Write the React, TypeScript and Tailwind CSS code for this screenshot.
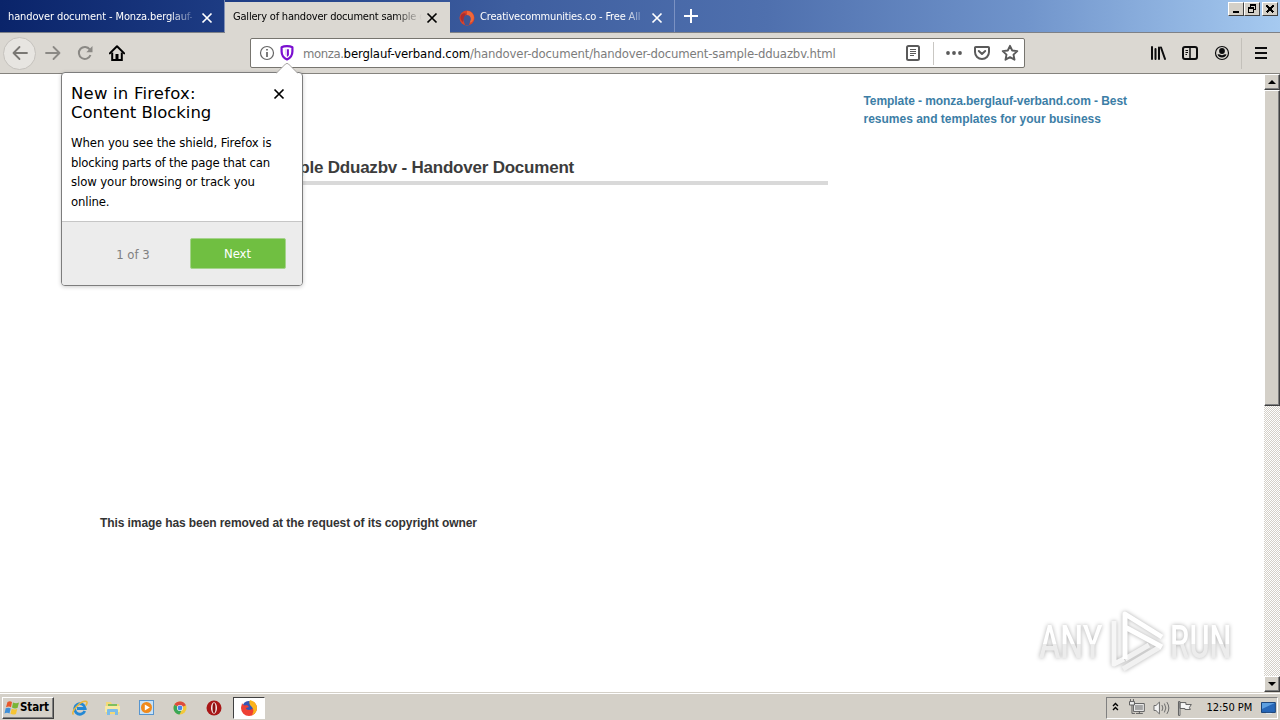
import React from "react";

const ui = "font-['DejaVu_Sans_Condensed','DejaVu_Sans',sans-serif] [font-stretch:condensed]";

function CloseIcon({ className = "" }: { className?: string }) {
  return (
    <svg width="12" height="12" viewBox="0 0 12 12" className={className}>
      <path d="M1.5 1.5l9 9M10.5 1.5l-9 9" stroke="currentColor" strokeWidth="1.7" fill="none" />
    </svg>
  );
}

function TabStrip() {
  return (
    <div
      className={`${ui} relative flex h-[33px] shrink-0 border-b border-[#7e8187] bg-[linear-gradient(91deg,#0a246a_0%,#203f87_20%,#3e5e9f_40%,#4f70ae_60%,#7094cb_80%,#a6caf0_100%)] text-[11px] text-white`}
    >
      <div className="flex w-[225px] items-center border-r border-[#8190b5] pt-[3px] pl-2">
        <span className="w-[184px] whitespace-nowrap tracking-[-0.12px] [mask-image:linear-gradient(90deg,#000_88%,transparent_104%)]">
          handover document - Monza.berglauf-
        </span>
        <CloseIcon className="ml-[9px]" />
      </div>
      <div className="mt-0.5 -mb-px flex w-[225px] items-center bg-[#dbd8d2] pl-2 text-black">
        <span className="w-[189px] whitespace-nowrap tracking-[-0.2px] [mask-image:linear-gradient(90deg,#000_85%,transparent)]">
          Gallery of handover document sample d
        </span>
        <CloseIcon className="ml-1" />
      </div>
      <div className="flex w-[225px] items-center border-r border-[#7b92c3] pt-[3px] pl-[9px]">
        <svg width="16" height="16" viewBox="0 0 16 16" className="mr-[5px]">
          <circle cx="8" cy="8" r="7.5" fill="#d8442a" />
          <path d="M8 1a6.5 6.5 0 0 1 5 11l-3 1c2-3 2-6-2-7z" fill="#f0683a" />
          <path d="M5 12c-2-4 0-7 3-7s5 3 3 7l-1 3H6z" fill="#3e5695" />
          <path d="M2 5c2-2 4-2 5-1L5 7 4 12C1 10 1 7 2 5z" fill="#a92d32" />
        </svg>
        <span className="w-[163px] whitespace-nowrap tracking-[-0.18px] [mask-image:linear-gradient(90deg,#000_88%,transparent_104%)]">
          Creativecommunities.co - Free All
        </span>
        <CloseIcon className="ml-2" />
      </div>
      <svg width="14" height="14" viewBox="0 0 14 14" className="mt-[9px] ml-[9px]">
        <path d="M7 0v14M0 7h14" stroke="#fff" strokeWidth="2" />
      </svg>
      <div className="absolute top-0.5 right-0.5 flex text-black">
        {["min", "restore", "close"].map((kind) => (
          <div
            key={kind}
            className={`flex h-[14px] w-4 items-center justify-center border border-t-white border-r-[#404040] border-b-[#404040] border-l-white bg-[#d4d0c8] ${kind === "close" ? "ml-0.5" : ""}`}
          >
            <svg width="12" height="10" viewBox="0 0 12 10" className="shrink-0" fill="none" stroke="#000" shapeRendering="crispEdges">
              {kind === "min" && <path d="M3 8h6" strokeWidth="2" />}
              {kind === "restore" && (
                <g>
                  <path d="M4.5 3V1.500h5v4H8M2.500 4.500h5v4h-5z" />
                  <path d="M4 1h6M2 4h6" strokeWidth="2" />
                </g>
              )}
              {kind === "close" && <path d="M2.500 1.500l7 7M9.500 1.500l-7 7" strokeWidth="1.500" />}
            </svg>
          </div>
        ))}
      </div>
    </div>
  );
}

function Toolbar() {
  return (
    <div className="flex h-[41px] shrink-0 items-center border-b border-[#85837e] bg-[#dbd8d2]">
      <div className="ml-[3px] flex size-[33px] items-center justify-center rounded-full border border-[#c5c2bd] bg-[#e7e5e1] text-[#7a7874]">
        <svg width="16" height="16" viewBox="0 0 16 16" fill="none" stroke="currentColor" strokeWidth="1.8" strokeLinecap="round" strokeLinejoin="round">
          <path d="M15 8H1.500M7.500 2l-6 6 6 6" />
        </svg>
      </div>
      <svg width="16" height="16" viewBox="0 0 16 16" className="ml-[9px]" fill="none" stroke="#8b8985" strokeWidth="1.8" strokeLinecap="round" strokeLinejoin="round">
        <path d="M1 8h13.500M8.500 2l6 6-6 6" />
      </svg>
      <svg width="16" height="16" viewBox="0 0 16 16" className="ml-4" fill="none" stroke="#8b8985" strokeWidth="2">
        <path d="M12.800 4.500A6 6 0 1 0 13.500 10" />
        <path d="M15.500 1v6.200H9.300z" fill="#8b8985" stroke="none" />
      </svg>
      <svg width="16" height="16" viewBox="0 0 16 16" className="ml-4" fill="none">
        <path d="M.8 8.400L8 1.200l7.200 7.200" stroke="#000" strokeWidth="2" strokeLinecap="round" strokeLinejoin="round" />
        <path d="M3.200 7.500V15h9.600V7.500" stroke="#000" strokeWidth="2" />
        <path d="M6.500 9h3v6h-3z" fill="#000" />
      </svg>

      <div className={`${ui} ml-[125px] flex h-[30px] w-[775px] items-center rounded-[2px] border border-[#77756f] bg-white text-[13px] text-[#7c7c7c]`}>
        <svg width="16" height="16" viewBox="0 0 16 16" className="ml-2" fill="none" stroke="#656565">
          <circle cx="8" cy="8" r="6.500" strokeWidth="1.200" />
          <path d="M8 7v5M8 4v1.600" strokeWidth="1.700" />
        </svg>
        <svg width="14" height="16" viewBox="0 0 14 16" className="ml-[5px]">
          <path d="M7 1.200c2 0 4 .3 5.400 1v4.300c0 3.700-1.900 6.400-5.400 8-3.500-1.600-5.400-4.300-5.400-8V2.200C3 1.500 5 1.200 7 1.200z" fill="none" stroke="#7a0fd0" strokeWidth="2.200" strokeLinejoin="round" />
          <path d="M7 4.200h1.900v6.100L7 12z" fill="#7a0fd0" />
          <path d="M5.100 4.200H7V12l-1.900-2.500z" fill="#e6d2f7" />
        </svg>
        <span className="mt-px ml-[9px] w-[601px] whitespace-nowrap">
          <span className="tracking-[-0.4px]">monza.</span>
          <span className="tracking-[-0.12px] text-black">berglauf-verband.com</span>
          <span className="tracking-[-0.15px]">/handover-document/handover-document-sample-dduazbv.html</span>
        </span>
        <svg width="16" height="16" viewBox="0 0 16 16" className="ml-px" fill="none" stroke="#5a5a5a">
          <rect x="2" y="1" width="12" height="14" rx="1.500" strokeWidth="2" />
          <path d="M5 4.500h6M5 6.500h6M5 8.500h6M5 10.500h4" />
        </svg>
        <div className="mx-3 h-[23px] w-px bg-[#c9c7c3]" />
        <svg width="16" height="16" viewBox="0 0 16 16" fill="#5a5a5a">
          <circle cx="2" cy="8" r="1.900" />
          <circle cx="8" cy="8" r="1.900" />
          <circle cx="14" cy="8" r="1.900" />
        </svg>
        <svg width="16" height="16" viewBox="0 0 16 16" className="ml-3" fill="none" stroke="#5a5a5a" strokeWidth="2" strokeLinejoin="round" strokeLinecap="round">
          <path d="M1.800 2h12.400a.8.8 0 0 1 .8.8V7A7 7 0 0 1 1 7V2.800a.8.8 0 0 1 .8-.8z" />
          <path d="M4.800 6L8 9l3.200-3" />
        </svg>
        <svg width="18" height="18" viewBox="0 0 18 18" className="ml-[11px] shrink-0" fill="none" stroke="#5a5a5a" strokeWidth="1.900" strokeLinejoin="round">
          <path d="M9 1.800l2.200 4.700 5.100.6-3.800 3.500 1 5.100L9 13.200l-4.500 2.500 1-5.100L1.700 7.100l5.100-.6z" />
        </svg>
      </div>

      <svg width="16" height="16" viewBox="0 0 16 16" className="ml-[125px]" fill="none" stroke="#0c0c0d" strokeWidth="2" strokeLinecap="round">
        <path d="M2 2v12M5.500 4v10M9 2.500V14M11 2.500L15 14" />
      </svg>
      <svg width="16" height="16" viewBox="0 0 16 16" className="ml-4" fill="none" stroke="#0c0c0d">
        <rect x="1" y="2" width="14" height="12" rx="2" strokeWidth="2" />
        <path d="M8 2v12" strokeWidth="1.500" />
        <path d="M3.500 5.500H6M3.500 7.500H6M3.500 9.500H5" />
      </svg>
      <svg width="16" height="16" viewBox="0 0 16 16" className="ml-4">
        <circle cx="8" cy="8" r="6.500" fill="none" stroke="#0c0c0d" strokeWidth="1.200" />
        <circle cx="8" cy="6" r="2.900" fill="#0c0c0d" />
        <path d="M3.400 9.500Q5 8.800 6 9.600q2 1.200 4 0 1-.8 2.600-.1A5 5 0 0 1 3.400 9.500z" fill="#0c0c0d" />
      </svg>
      <div className="ml-[11px] h-[31px] w-px bg-[#c3c0ba]" />
      <svg width="12" height="12" viewBox="0 0 12 12" className="ml-[13px]" stroke="#0c0c0d" strokeWidth="2">
        <path d="M0 1h12M0 6h12M0 11h12" />
      </svg>
    </div>
  );
}

function ScrollArrow({ up = false }: { up?: boolean }) {
  return (
    <div className="flex h-4 w-full shrink-0 items-center justify-center border border-t-white border-r-[#404040] border-b-[#404040] border-l-white bg-[#d4d0c8] shadow-[inset_-1px_-1px_#808080]">
      <svg width="8" height="4" viewBox="0 0 8 4">
        <path d={up ? "M4 0l4 4H0z" : "M0 0h8L4 4z"} />
      </svg>
    </div>
  );
}

function Page() {
  return (
    <div className="flex min-h-0 flex-1 bg-white">
      <main className="flex flex-1 items-start pl-[99px] font-['Liberation_Sans',Arial,sans-serif] font-bold">
        <div className="w-[729px]">
          <h1 className="mt-[83px] flex h-[28px] justify-end border-b-4 border-[#d9d9d9] pr-[254px] text-[17px] leading-[22px] tracking-[-0.22px] whitespace-nowrap text-[#3c3c3c]">
            Handover Document Sample Dduazbv - Handover Document
          </h1>
          <p className="mt-[329px] pl-px text-[12px] leading-[18px] tracking-[-0.08px] whitespace-nowrap text-[#333]">
            This image has been removed at the request of its copyright owner
          </p>
        </div>
        <p className="mt-[18px] ml-[35.500px] w-[290px] text-[12px] leading-[18px] text-[#3c7ea6]">
          <span className="tracking-[-0.07px]">Template - monza.berglauf-verband.com - Best</span>
          <br />
          resumes and templates for your business
        </p>
      </main>
      <div className="flex w-4 flex-col bg-[repeating-conic-gradient(#d4d0c8_0_25%,#fff_0_50%)] bg-[length:2px_2px]">
        <ScrollArrow up />
        <div className="h-[316px] border border-t-white border-r-[#404040] border-b-[#404040] border-l-white bg-[#d4d0c8] shadow-[inset_-1px_-1px_#808080]" />
        <div className="flex-1" />
        <ScrollArrow />
      </div>
    </div>
  );
}

function Doorhanger() {
  return (
    <div className={`${ui} absolute top-[72px] left-[61px] flex h-[214px] w-[242px] flex-col rounded-[4px] border border-[#7d7d7d] bg-white text-black shadow-[0_1px_4px_rgba(0,0,0,0.2)]`}>
      <svg width="22" height="11" viewBox="0 0 22 11" className="absolute -top-[10px] left-[214px]">
        <path d="M0 10.500L9.500 1q1.500-1.200 3 0L22 10.500" fill="#fff" stroke="#a5a3a0" />
        <path d="M1 10h20v1H1z" fill="#fff" />
      </svg>
      <div className="flex h-[148px] flex-col px-[9px] pt-[11px]">
        <div className="flex items-start justify-between">
          <h2 className="font-['DejaVu_Sans',sans-serif] text-[16.500px] leading-[19px] whitespace-nowrap [font-stretch:normal]">
            <span className="tracking-[0.2px]">New in Firefox:</span>
            <br />
            <span className="tracking-[-0.05px]">Content Blocking</span>
          </h2>
          <CloseIcon className="mt-1 mr-2" />
        </div>
        <p className="mt-[11px] text-[13px] leading-[19.700px] tracking-[-0.14px] whitespace-nowrap">
          <span className="tracking-[-0.08px]">When you see the shield, Firefox is</span>
          <br />
          <span className="tracking-[-0.2px]">blocking parts of the page that can</span>
          <br />
          <span className="tracking-[-0.1px]">slow your browsing or track you</span>
          <br />
          online.
        </p>
      </div>
      <div className="flex flex-1 items-center rounded-b-[3px] border-t border-[#c6c6c6] bg-[#ececec] pr-4 text-[13px]">
        <span className="mt-0.5 flex-1 pl-[14px] text-center text-[#808080]">1 of 3</span>
        <button className="h-[31px] w-[96px] rounded-[2px] border border-[#a5d38c] bg-[#70bf41] pr-px text-white">Next</button>
      </div>
    </div>
  );
}

function Watermark() {
  return (
    <div className="absolute top-[608px] left-[1039px] flex h-[66px] w-[194px] items-center justify-between pt-0.5 font-['Roboto',sans-serif] text-[46px] font-medium text-white [filter:drop-shadow(0_0_2px_rgba(0,0,0,0.32))]">
      <div className="w-[64px]">
        <span className="inline-block origin-left scale-x-[0.7] bg-[linear-gradient(#fff_52%,#ececec_52%)] bg-clip-text whitespace-nowrap text-transparent">
          ANY
        </span>
      </div>
      <svg width="60" height="64" viewBox="0 0 60 64" fill="none" stroke="#fff" strokeWidth="5" strokeLinejoin="round" className="absolute top-px left-[68px]">
        <path d="M7 12v43l10-5" stroke="#f6f6f6" />
        <path d="M16 60l37-22M18 50l24-14" stroke="#f1f1f1" />
        <path d="M18 50V5l37 23M18 18l37 20" />
      </svg>
      <div className="w-[63px]">
        <span className="inline-block origin-left scale-x-[0.67] bg-[linear-gradient(#fff_52%,#ececec_52%)] bg-clip-text whitespace-nowrap text-transparent">
          RUN
        </span>
      </div>
    </div>
  );
}

function Taskbar() {
  return (
    <div className={`${ui} flex h-7 shrink-0 items-center border-t border-[#d4d0c8] bg-[#d4d0c8] text-[11px] text-black shadow-[inset_0_1px_#fff]`}>
      <button className="mt-0.5 ml-0.5 flex h-[22px] w-[52px] items-center border border-t-white border-r-[#404040] border-b-[#404040] border-l-white font-bold shadow-[inset_-1px_-1px_#808080]">
        <svg width="16" height="16" viewBox="0 0 16 16" className="ml-px shrink-0">
          <path d="M3.500 2Q6 .5 8 2L7 7.200Q5 6 2 7.200z" fill="#e8582b" />
          <path d="M9 2.500q3 1.500 6 0L13.500 8q-3 1-5.500-.5z" fill="#79b536" />
          <path d="M1.700 8.200q3-1 5 .2L5.500 13.500q-2.500-1.300-5 0z" fill="#3f8fd8" />
          <path d="M7.700 8.700q3 1.300 5.500.3L12 14q-3 1.300-5.500-.2z" fill="#f6c433" />
        </svg>
        <span className="text-[11.500px] tracking-[-0.1px]">Start</span>
      </button>
      <svg width="18" height="18" viewBox="0 0 18 18" className="mt-0.5 ml-[17px]" fill="none">
        <path d="M13.800 12A5.300 5.300 0 1 1 14.200 9.500H6" stroke="#2388d4" strokeWidth="2.800" />
        <path d="M2.500 15.500C-1 13 10 1 15.500 2.500c1.800 1-.8 4-.8 4" stroke="#e9b63a" strokeWidth="1.500" />
      </svg>
      <svg width="18" height="18" viewBox="0 0 18 18" className="mt-0.5 ml-[15px]">
        <path d="M2 3h5l1 2h7v10H2z" fill="#f2d978" />
        <path d="M4 5h9v2H4z" fill="#7fbf5e" />
        <path d="M1 7h15v6H1z" fill="#f8e9a4" />
        <path d="M3 16v-5q0-1 1-1h9q1 0 1 1v5h-3v-3H6v3z" fill="#7cbce8" />
      </svg>
      <svg width="18" height="18" viewBox="0 0 18 18" className="mt-0.5 ml-4">
        <rect x="1.500" y="1.500" width="14" height="14" fill="#c8e2f7" stroke="#5795cf" />
        <circle cx="8.500" cy="8.500" r="5.500" fill="#f08a1c" />
        <path d="M6.800 5.500v6l5-3z" fill="#fff" />
      </svg>
      <svg width="16" height="16" viewBox="0 0 16 16" className="mt-0.5 ml-4">
        <circle cx="8" cy="8" r="6.500" fill="#f2c83b" />
        <path d="M8 8L2.400 4.700A6.500 6.500 0 0 1 13.900 5.200z" fill="#dd4b3e" />
        <path d="M8 8L2.400 4.700A6.500 6.500 0 0 0 7.500 14.500l2.500-5z" fill="#3aa757" />
        <circle cx="8" cy="8" r="3" fill="#fff" />
        <circle cx="8" cy="8" r="2.400" fill="#4687e8" />
      </svg>
      <svg width="16" height="16" viewBox="0 0 16 16" className="mt-0.5 ml-[18px]">
        <circle cx="8" cy="8" r="7.500" fill="#a91717" />
        <ellipse cx="8" cy="8" rx="3" ry="5.800" fill="#f7eeee" />
        <ellipse cx="8" cy="8" rx="1.500" ry="5" fill="#8b1010" />
      </svg>
      <div className="mt-0.5 ml-[11px] flex h-[22px] w-8 items-center justify-center border border-t-[#404040] border-r-white border-b-white border-l-[#404040] bg-white">
        <svg width="18" height="18" viewBox="0 0 18 18">
          <circle cx="8.500" cy="8" r="6" fill="#3556b5" />
          <path d="M2 4c0 2-1 3-1 5a8 8 0 0 0 16 0c0-3-2-5-3-6 1 4-1 8-5 8-2 0-3-1-3-2l3-1-2-2c-3 1-4 0-5-2z" fill="#ee4034" />
          <path d="M10 1c4 1 7 4 7 8 0 3-2 6-5 7 2-4 2-6-1-9-2-2-2-4-1-6z" fill="#fbb41c" />
        </svg>
      </div>

      <div className="mt-0.5 mr-0.5 ml-auto flex h-[22px] w-[172px] items-center border border-t-[#808080] border-r-white border-b-white border-l-[#808080]">
        <svg width="7" height="9" viewBox="0 0 7 9" className="mb-0.5 ml-[5px]" fill="none" stroke="#000" strokeWidth="1.400">
          <path d="M1 4l2.500-2.500L6 4M1 8l2.500-2.500L6 8" />
        </svg>
        <svg width="16" height="16" viewBox="0 0 16 16" className="mb-0.5 ml-[10px]" fill="none" stroke="#606060">
          <path d="M4.500 4.500h11v8h-11z" fill="#eee" />
          <path d="M6 6h8v5H6z" fill="#a5a5a5" stroke="none" />
          <path d="M.5 2.500h5V6h-5zM1.500 0v2M4.500 0v2" fill="#eee" />
          <path d="M3 6v8.500h3M7 14.500h7M10.500 12v3" />
        </svg>
        <svg width="17" height="16" viewBox="0 0 17 16" className="ml-2" fill="none" stroke="#6b6b6b">
          <path d="M1 5.500h2L6.500 2v12L3 10.500H1z" fill="#f4f4f4" />
          <path d="M9 5q2 3 0 6M11.500 3.500q3 4.500 0 9M14 2q4 6 0 12" />
        </svg>
        <svg width="16" height="16" viewBox="0 0 16 16" className="ml-[7px]" fill="#f6f6f6" stroke="#606060">
          <path d="M1.500 1.500H3v14H1.500zM3 2.500h6v2h5.500l-2 3 1 2H8v-1H3z" />
        </svg>
        <span className="mt-px ml-[14px] whitespace-nowrap tracking-[-0.05px]">12:50 PM</span>
        <svg width="16" height="14" viewBox="0 0 16 14" className="ml-[9px]">
          <path d="M.5 1.500h14v10H.5z" fill="#2767b8" stroke="#174279" />
          <path d="M1 2h13L1 8z" fill="#5d9fe0" />
          <path d="M5 12h6v1H5z" fill="#dce8f4" />
        </svg>
      </div>
    </div>
  );
}

export default function App() {
  return (
    <div className="relative flex h-[720px] w-[1280px] flex-col overflow-hidden bg-white">
      <TabStrip />
      <Toolbar />
      <Page />
      <Taskbar />
      <Doorhanger />
      <Watermark />
    </div>
  );
}
